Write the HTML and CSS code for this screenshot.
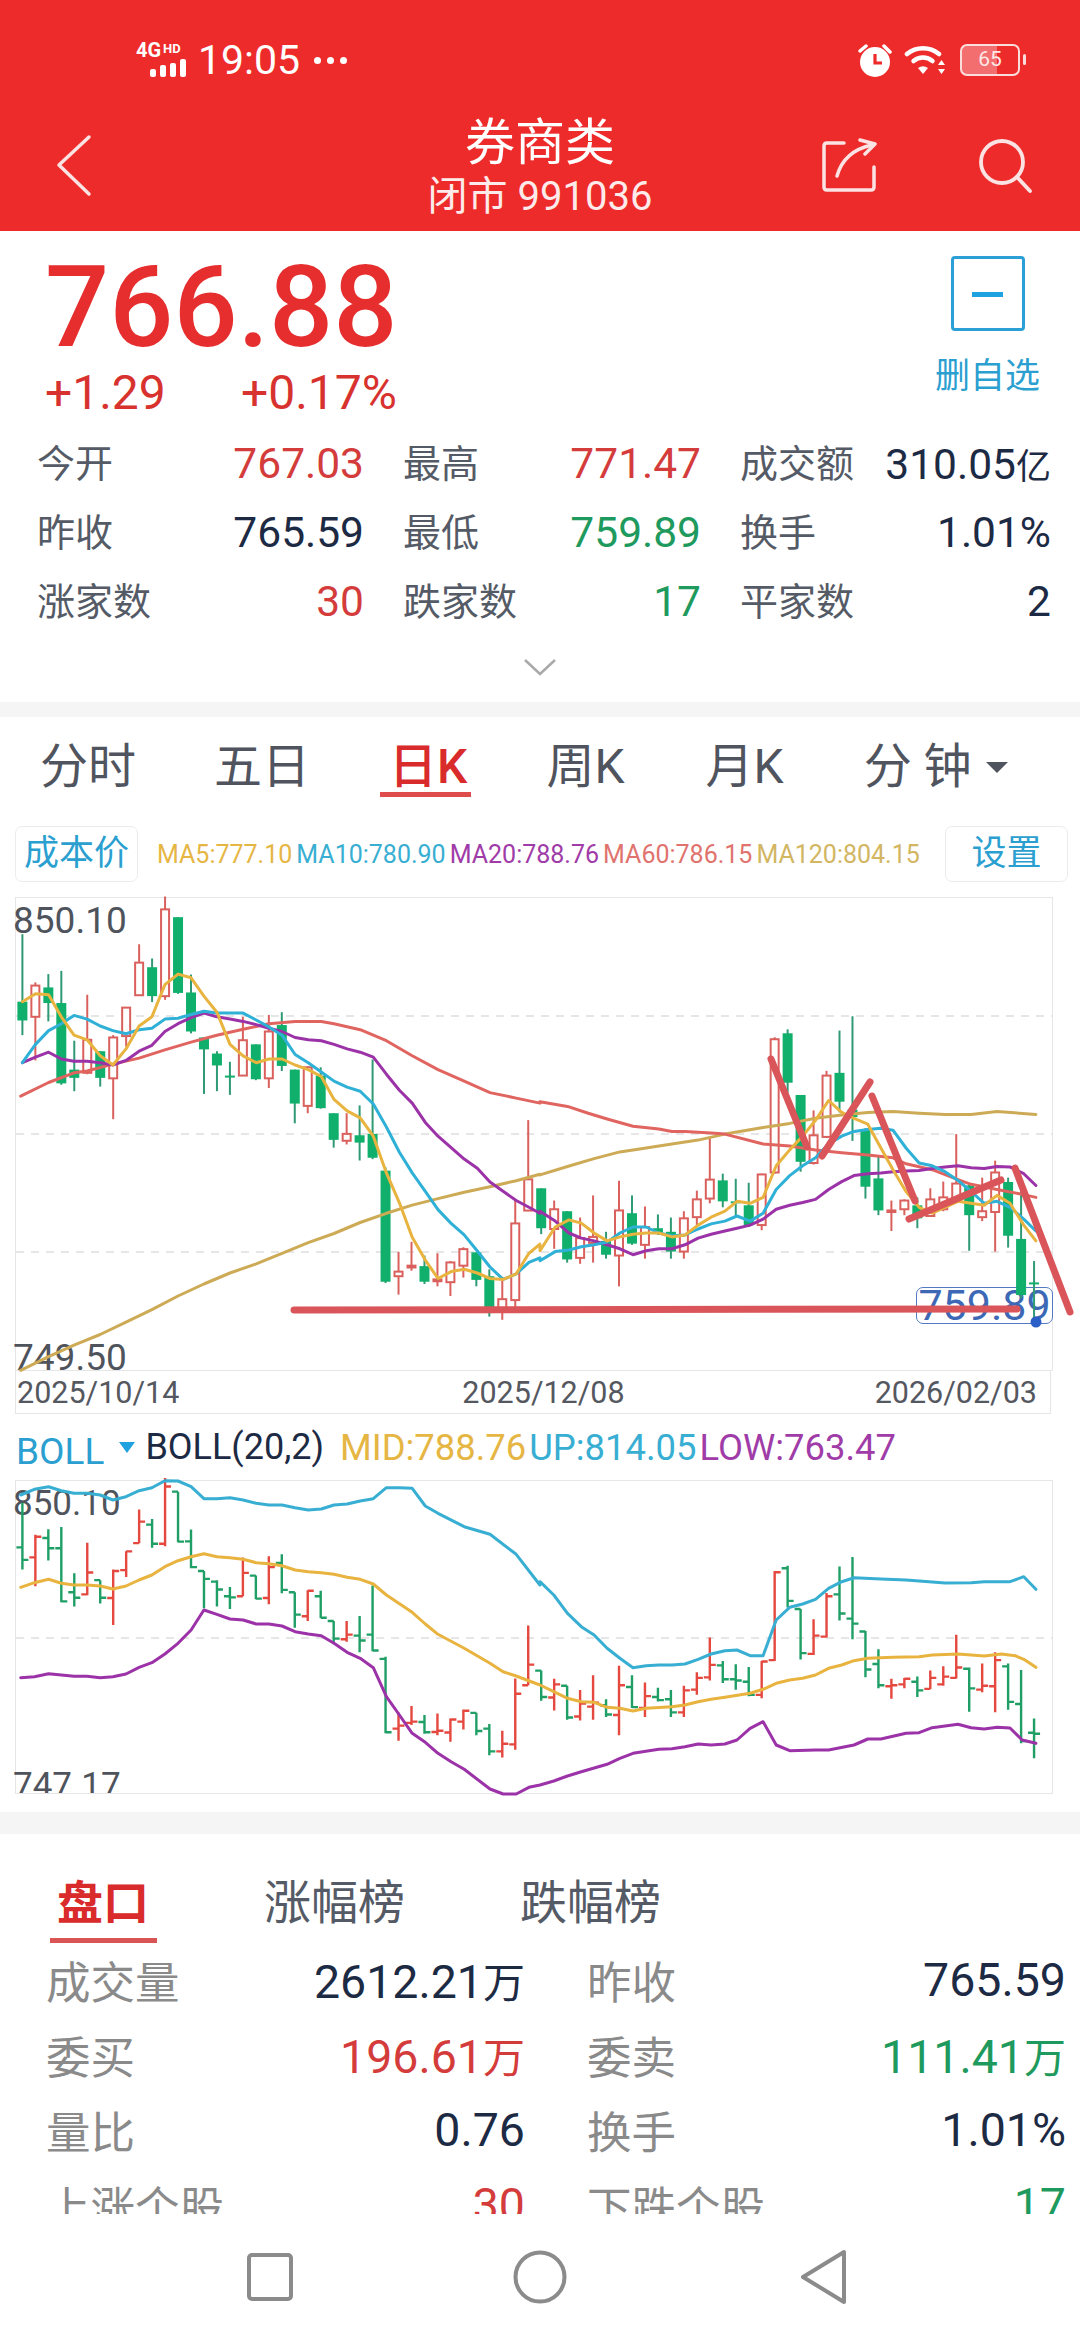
FILE: index.html
```html
<!DOCTYPE html>
<html lang="zh-CN">
<head>
    <meta charset="UTF-8">
    <meta name="viewport" content="width=device-width, initial-scale=1.0">
    <title>券商类</title>
    <link rel="stylesheet" href="styles.css">
</head>
<body>
    <header class="topbar">
        <div class="statusbar">
            <div class="status-left">
                <div class="network">
                    <div class="network-label"><span class="net-4g">4G</span><span class="net-hd">HD</span></div>
                    <div class="signal"><i class="s1"></i><i class="s2"></i><i class="s3"></i><i class="s4"></i></div>
                </div>
                <span class="clock">19:05</span>
                <div class="dots"><i></i><i></i><i></i></div>
            </div>
            <div class="status-right">
                <svg class="alarm" width="34" height="36" viewBox="0 0 34 36">
                    <circle cx="17" cy="20" r="15" fill="#fff"/>
                    <path d="M2 9 L8 4 M26 4 L32 10" stroke="#fff" stroke-width="3.5" stroke-linecap="round"/>
                    <path d="M17 12 V21 H24" fill="none" stroke="#ee2b2b" stroke-width="3.2"/>
                </svg>
                <svg class="wifi" width="42" height="32" viewBox="0 0 42 32" fill="none" stroke="#fff" stroke-linecap="round">
                    <path d="M3 10 A 25 25 0 0 1 35 10" stroke-width="4.5"/>
                    <path d="M9.5 17 A 15 15 0 0 1 28.5 17" stroke-width="4.5"/>
                    <path d="M14 24 L19 30 L24 24 Q19 20.5 14 24 Z" fill="#fff" stroke="none"/>
                    <path d="M34 21 L37.5 16 L41 21 Z M34 25 L37.5 30 L41 25 Z" fill="#fff" stroke="none"/>
                </svg>
                <div class="battery"><div class="battery-fill"></div><span class="battery-num">65</span></div>
            </div>
        </div>
        <div class="navrow">
            <svg class="icon-back" width="40" height="64" viewBox="0 0 40 64" fill="none" stroke="#fbe3e3" stroke-width="3.5" stroke-linecap="round" stroke-linejoin="round">
                <path d="M33 3 L3 31 L33 60"/>
            </svg>
            <div class="title-block">
                <div class="title">券商类</div>
                <div class="subtitle">闭市 991036</div>
            </div>
            <div class="nav-actions">
                <svg class="icon-share" width="56" height="56" viewBox="0 0 56 56" fill="none" stroke="#fbe3e3" stroke-width="3.5" stroke-linecap="round" stroke-linejoin="round">
                    <path d="M22 5 H5 Q2 5 2 8 V49 Q2 52 5 52 H49 Q52 52 52 49 V29"/>
                    <path d="M15 38 Q22 13 50 7"/>
                    <path d="M38 2 L53 6 L43 16"/>
                </svg>
                <svg class="icon-search" width="56" height="56" viewBox="0 0 56 56" fill="none" stroke="#fbe3e3" stroke-width="3.8" stroke-linecap="round">
                    <circle cx="24" cy="24" r="21"/>
                    <path d="M39 39 L52 53"/>
                </svg>
            </div>
        </div>
    </header>

    <section class="quote">
        <div class="quote-head">
            <div>
                <div class="price">766.88</div>
                <div class="change"><span class="change-abs">+1.29</span><span>+0.17%</span></div>
            </div>
            <div class="watch">
                <div class="watch-box"><i></i></div>
                <div class="watch-label">删自选</div>
            </div>
        </div>
        <div class="stats">
            <div class="stat"><span class="label">今开</span><span class="up">767.03</span></div>
            <div class="stat"><span class="label">最高</span><span class="up">771.47</span></div>
            <div class="stat"><span class="label">成交额</span><span class="plain">310.05<span class="unit-small">亿</span></span></div>
            <div class="stat"><span class="label">昨收</span><span class="plain">765.59</span></div>
            <div class="stat"><span class="label">最低</span><span class="down">759.89</span></div>
            <div class="stat"><span class="label">换手</span><span class="plain">1.01%</span></div>
            <div class="stat"><span class="label">涨家数</span><span class="up">30</span></div>
            <div class="stat"><span class="label">跌家数</span><span class="down">17</span></div>
            <div class="stat"><span class="label">平家数</span><span class="plain">2</span></div>
        </div>
        <svg class="expand" width="34" height="18" viewBox="0 0 34 18" fill="none" stroke="#a9a9a9" stroke-width="2.5">
            <path d="M2 2 L17 16 L32 2"/>
        </svg>
    </section>

    <div class="band"></div>

    <section class="kline">
        <nav class="tabs">
            <span class="tab tab-fs">分时</span>
            <span class="tab tab-wr">五日</span>
            <span class="tab tab-active">日K</span>
            <span class="tab tab-week">周K</span>
            <span class="tab tab-month">月K</span>
            <span class="tab tab-min">分 钟<i class="caret"></i></span>
        </nav>

        <div class="ma-row">
            <div class="chip chip-cost">成本价</div>
            <div class="ma-legend">
                <span class="c-ma5">MA5:777.10</span>
                <span class="c-ma10">MA10:780.90</span>
                <span class="c-ma20">MA20:788.76</span>
                <span class="c-ma60">MA60:786.15</span>
                <span class="c-ma120">MA120:804.15</span>
            </div>
            <div class="chip chip-set">设置</div>
        </div>

        <div class="chart chart-main">
            <span class="axis axis-top">850.10</span>
            <span class="axis axis-bottom">749.50</span>
            <span class="last-price">759.89</span>
            <svg id="main-chart" class="plot" width="1036" height="472" viewBox="16 898 1036 472"></svg>
        </div>
        <div class="dates">
            <span>2025/10/14</span>
            <span class="date-mid">2025/12/08</span>
            <span class="date-end">2026/02/03</span>
        </div>

        <div class="boll-row">
            <span class="boll-name">BOLL</span>
            <i class="boll-caret"></i>
            <span class="boll-param">BOLL(20,2)</span>
            <span class="c-ma5">MID:788.76</span>
            <span class="c-ma10">UP:814.05</span>
            <span class="c-ma20">LOW:763.47</span>
        </div>
        <div class="chart chart-boll">
            <span class="axis boll-top">850.10</span>
            <span class="axis boll-bottom">747.17</span>
            <svg id="boll-chart" class="plot" width="1036" height="312" viewBox="16 1481 1036 312"></svg>
        </div>
    </section>

    <div class="band band-low"></div>

    <section class="panel">
        <nav class="panel-tabs">
            <span class="panel-tab panel-tab-active">盘口</span>
            <span class="panel-tab">涨幅榜</span>
            <span class="panel-tab">跌幅榜</span>
        </nav>
        <div class="panel-rows">
            <div class="panel-row"><span class="panel-label">成交量</span><span class="plain">2612.21<span class="unit">万</span></span></div>
            <div class="panel-row"><span class="panel-label">昨收</span><span class="plain">765.59</span></div>
            <div class="panel-row"><span class="panel-label">委买</span><span class="up">196.61<span class="unit">万</span></span></div>
            <div class="panel-row"><span class="panel-label">委卖</span><span class="down">111.41<span class="unit">万</span></span></div>
            <div class="panel-row"><span class="panel-label">量比</span><span class="plain">0.76</span></div>
            <div class="panel-row"><span class="panel-label">换手</span><span class="plain">1.01%</span></div>
            <div class="panel-row"><span class="panel-label">上涨个股</span><span class="up">30</span></div>
            <div class="panel-row"><span class="panel-label">下跌个股</span><span class="down">17</span></div>
        </div>
    </section>

    <footer class="sysnav">
        <svg class="nav-square" width="48" height="50" viewBox="0 0 48 50" fill="none" stroke="#8b8b8b" stroke-width="4">
            <rect x="3" y="3" width="42" height="44" rx="3"/>
        </svg>
        <svg class="nav-circle" width="54" height="54" viewBox="0 0 54 54" fill="none" stroke="#8b8b8b" stroke-width="4">
            <circle cx="27" cy="27" r="24.5"/>
        </svg>
        <svg class="nav-back" width="48" height="56" viewBox="0 0 48 56" fill="none" stroke="#8b8b8b" stroke-width="4" stroke-linejoin="round">
            <path d="M44 3 V53 L3 28 Z"/>
        </svg>
    </footer>

    <script src="chart.js"></script>
</body>
</html>
```

FILE: styles.css
```css
* {
    box-sizing: border-box;
}
body {
    font-family: Roboto, "Noto Sans CJK SC", sans-serif;
    margin: 0;
    width: 1080px;
    height: 2340px;
    overflow: hidden;
    background-color: #fff;
    color: #1d2a44;
}
i {
    display: block;
}

/* top red bar */
.topbar {
    height: 231px;
    background-color: #ee2b2b;
    color: #fff;
}
.statusbar {
    height: 117px;
    padding: 3px 60px 0 136px;
    display: flex;
    justify-content: space-between;
    align-items: center;
}
.status-left,
.status-right {
    display: flex;
    align-items: center;
}
.network {
    width: 56px;
    height: 34px;
    display: flex;
    flex-direction: column;
    justify-content: space-between;
}
.network-label {
    display: flex;
    align-items: flex-start;
    font-weight: 700;
    line-height: 14px;
    height: 14px;
}
.net-4g {
    font-size: 20px;
}
.net-hd {
    font-size: 13px;
    margin-left: 2px;
    line-height: 11px;
}
.signal {
    display: flex;
    align-items: flex-end;
    gap: 4px;
    padding-left: 14px;
    height: 18px;
}
.signal i {
    width: 6px;
    background-color: #fff;
    border-radius: 2px;
}
.s1 { height: 8px; }
.s2 { height: 12px; }
.s3 { height: 14px; }
.s4 { height: 18px; }
.clock {
    font-size: 41px;
    line-height: 46px;
    margin-left: 6px;
}
.dots {
    display: flex;
    gap: 6px;
    margin-left: 14px;
}
.dots i {
    width: 7px;
    height: 7px;
    border-radius: 50%;
    background-color: #fff;
}
.status-right .wifi {
    margin-left: 12px;
}
.battery {
    position: relative;
    width: 60px;
    height: 32px;
    margin-left: 14px;
    border: 2.5px solid #fbdcdc;
    border-radius: 7px;
    overflow: visible;
}
.battery::after {
    content: "";
    position: absolute;
    right: -8px;
    top: 8px;
    width: 3px;
    height: 11px;
    background-color: #fbdcdc;
    border-radius: 2px;
}
.battery-fill {
    width: 35px;
    height: 100%;
    background-color: rgba(255, 255, 255, 0.32);
    border-radius: 4px 0 0 4px;
}
.battery-num {
    position: absolute;
    left: 0;
    right: 0;
    top: 0;
    bottom: 0;
    text-align: center;
    font-size: 21px;
    line-height: 27px;
    color: #fde8e8;
}
.navrow {
    height: 114px;
    display: grid;
    grid-template-columns: 1fr auto 1fr;
    padding: 0 46px;
}
.icon-back {
    margin: 17px 0 0 10px;
}
.title-block {
    text-align: center;
}
.title {
    font-size: 50px;
    line-height: 52px;
}
.subtitle {
    font-size: 40px;
    line-height: 56px;
    color: #fdeaea;
}
.nav-actions {
    display: flex;
    justify-content: flex-end;
    gap: 100px;
    padding-top: 21px;
    align-items: flex-start;
}

/* quote block */
.quote {
    height: 471px;
}
.quote-head {
    height: 198px;
    padding: 25px 40px 0 45px;
    display: flex;
    justify-content: space-between;
}
.price {
    font-size: 113px;
    line-height: 104px;
    font-weight: 500;
    color: #e62e2e;
}
.change {
    font-size: 48px;
    line-height: 50px;
    margin-top: 8px;
    color: #d8322f;
    display: flex;
}
.change-abs {
    width: 196px;
}
.watch {
    width: 105px;
    display: flex;
    flex-direction: column;
    align-items: center;
}
.watch-box {
    flex-shrink: 0;
    width: 74px;
    height: 75px;
    border: 3px solid #2b9fd6;
    border-radius: 4px;
    display: flex;
    justify-content: center;
    padding-top: 33px;
}
.watch-box i {
    width: 31px;
    height: 5px;
    background-color: #1fa3e0;
}
.watch-label {
    font-size: 35px;
    line-height: 44px;
    margin-top: 24px;
    white-space: nowrap;
    color: #2b9fd0;
}
.stats {
    padding-left: 37px;
    display: grid;
    grid-template-columns: 327px 298px 311px;
    column-gap: 39px;
    grid-auto-rows: 69px;
    font-size: 42.5px;
    align-items: center;
}
.stat {
    display: flex;
    justify-content: space-between;
    align-items: center;
}
.label {
    font-size: 38px;
    line-height: 58px;
    color: #555b66;
}
.unit-small {
    font-size: 35px;
}
.plain {
    color: #1d2a44;
}
.up {
    color: #d43c3c;
}
.down {
    color: #1f9a5e;
}
.expand {
    display: block;
    margin: 22px 0 0 523px;
}
.band {
    height: 15px;
    background-color: #f5f5f5;
}
.band-low {
    height: 22px;
    margin-top: 18px;
}

/* k line tabs */
.tabs {
    height: 100px;
    padding-left: 40px;
    display: flex;
    align-items: center;
    font-size: 48px;
    color: #50545e;
}
.tab {
    position: relative;
    display: flex;
    align-items: center;
    line-height: 60px;
}
.tab-wr { margin-left: 78px; }
.tab-active {
    margin-left: 79px;
    font-weight: 500;
    color: #d92b2b;
}
.tab-active::after {
    content: "";
    position: absolute;
    left: -9px;
    right: -4px;
    top: 55px;
    height: 5px;
    background-color: #de4c4c;
}
.tab-week { margin-left: 79px; }
.tab-month { margin-left: 81px; }
.tab-min { margin-left: 80px; }
.caret {
    width: 0;
    height: 0;
    margin-left: 14px;
    border-left: 11px solid transparent;
    border-right: 11px solid transparent;
    border-top: 11px solid #50545e;
}
.ma-row {
    margin-top: 9px;
    height: 56px;
    padding: 0 12px 0 15px;
    display: flex;
    align-items: center;
}
.chip {
    height: 56px;
    width: 123px;
    border: 1.5px solid #ececec;
    border-radius: 7px;
    font-size: 35px;
    line-height: 54px;
    text-align: center;
    color: #2b9fd0;
}
.ma-legend {
    margin-left: 19px;
    flex: 1;
    display: flex;
    gap: 4px;
    font-size: 25px;
}
.c-ma5 { color: #e6b644; }
.c-ma10 { color: #38aed2; }
.c-ma20 { color: #a03ca8; }
.c-ma60 { color: #e0736e; }
.c-ma120 { color: #d2b662; }

/* charts */
.chart {
    position: relative;
    margin-left: 15px;
    width: 1038px;
    border: 1.5px solid #e6e6e6;
}
.chart-main {
    margin-top: 15px;
    height: 474px;
}
.chart-boll {
    height: 314px;
}
.plot {
    position: relative;
    display: block;
    overflow: visible;
}
.axis {
    position: absolute;
    left: -3px;
    color: #4f535c;
    font-size: 37px;
    line-height: 40px;
}
.axis-top {
    top: 3px;
}
.axis-bottom {
    bottom: -3px;
    height: 30px;
    line-height: 30px;
}
.boll-top {
    font-size: 35px;
    top: 3px;
}
.boll-bottom {
    font-size: 35px;
    bottom: 0;
    height: 24px;
    line-height: 34px;
    overflow: hidden;
}
.last-price {
    position: absolute;
    left: 900px;
    top: 389px;
    width: 137px;
    height: 37px;
    border: 1.5px solid #5279c4;
    border-radius: 7px;
    color: #3d68b5;
    font-size: 43px;
    line-height: 35px;
    text-align: center;
}
.dates {
    position: relative;
    margin-left: 15px;
    width: 1036px;
    height: 43px;
    border: 1.5px solid #e6e6e6;
    border-top: none;
    padding-left: 1px;
    font-size: 30.5px;
    line-height: 43px;
    color: #55585f;
    display: flex;
}
.date-mid {
    margin-left: 283px;
}
.date-end {
    margin-left: 250px;
}
.boll-row {
    height: 66px;
    padding-left: 16px;
    display: flex;
    align-items: center;
    font-size: 36.4px;
    gap: 3px;
}
.boll-name {
    color: #2b9fd0;
    font-size: 37px;
    position: relative;
    top: 4px;
}
.boll-caret {
    width: 0;
    height: 0;
    margin-left: 12px;
    border-left: 8px solid transparent;
    border-right: 8px solid transparent;
    border-top: 11px solid #1fa3e0;
}
.boll-param {
    margin: 0 13px 0 7px;
    color: #1d2a44;
    font-size: 36px;
}

/* bottom panel */
.panel {
    height: 380px;
}
.panel-tabs {
    height: 108px;
    padding: 42px 0 0 57px;
    display: flex;
    gap: 115px;
    font-size: 47px;
    line-height: 54px;
    color: #555b66;
}
.panel-tab {
    position: relative;
    height: 54px;
}
.panel-tab-active {
    font-size: 46px;
    font-weight: 700;
    color: #d92b2b;
}
.panel-tab-active::after {
    content: "";
    position: absolute;
    left: -7px;
    right: -8px;
    top: 62px;
    height: 5px;
    background-color: #d95555;
}
.panel-rows {
    height: 272px;
    overflow: hidden;
    padding-left: 46px;
    display: grid;
    grid-template-columns: 479px 479px;
    column-gap: 62px;
    grid-auto-rows: 75px;
    font-size: 46.5px;
    align-items: center;
}
.panel-row {
    display: flex;
    justify-content: space-between;
    align-items: center;
}
.panel-label {
    font-size: 44.5px;
    color: #8a8a8a;
}
.unit {
    font-size: 42px;
}
.sysnav {
    height: 126px;
    padding-left: 246px;
    display: flex;
    align-items: center;
}
.nav-circle {
    margin-left: 219px;
}
.nav-back {
    margin-left: 233px;
}
```

FILE: chart.js
```javascript
// Rows are read off the chart in two halves, each with its own vertical scale.
// [rising, high, bodyTop, bodyBottom, low]
const leftRows = [
    [0,510,657,698,730],[1,615,622,690,785],[0,597,626,660,700],[0,590,660,835,838],
    [0,742,805,823,852],[1,642,740,812,815],[0,765,765,823,842],[1,730,735,824,913],
    [1,670,670,732,755],[1,532,572,643,643],[0,563,582,645,658],[1,428,456,645,653],
    [0,473,473,638,640],[0,598,637,722,726],[0,735,735,761,858],[0,765,770,796,852],
    [0,788,818,822,860],[1,690,741,818,818],[0,750,750,826,828],[1,686,722,824,845],
    [0,680,708,797,808],[0,805,805,879,922],[1,798,800,884,900],[0,800,818,889,890],
    [0,900,900,958,975],[1,900,945,960,968],[0,883,948,964,1003],[0,783,945,997,1000],
    [0,1018,1025,1267,1270],[1,1202,1245,1255,1295],[1,1180,1232,1236,1243],[0,1210,1233,1267,1272],
    [1,1205,1262,1266,1277],[1,1222,1225,1268,1298],[1,1192,1196,1232,1258],[0,1203,1203,1263,1277],
    [0,1240,1255,1330,1343],[1,1262,1305,1330,1350],[1,1090,1140,1307,1325],[1,915,1044,1112,1112]
];
const rightRows = [
    [0,982,982,1083,1098],[1,1013,1035,1085,1135],[0,1040,1040,1162,1170],[1,1056,1108,1158,1173],
    [1,1000,1105,1120,1170],[0,1092,1115,1150,1160],[1,963,1038,1152,1230],[0,1000,1045,1122,1125],
    [1,1028,1080,1125,1160],[0,1048,1083,1095,1100],[0,1056,1092,1142,1160],[1,1040,1058,1142,1160],
    [1,988,1010,1055,1075],[1,855,960,1008,1020],[0,945,962,1015,1030],[0,958,1015,1020,1055],
    [0,968,1025,1075,1080],[1,945,947,1075,1088],[1,600,605,942,945],[0,580,590,715,740],
    [0,746,746,915,940],[1,785,848,918,922],[1,685,697,852,855],[0,583,690,763,790],
    [0,547,783,802,862],[0,830,832,978,1008],[0,900,957,1038,1050],[1,1013,1038,1042,1090],
    [1,1010,1013,1035,1050],[0,1005,1025,1058,1083],[1,982,1010,1052,1053],[1,965,1005,1035,1040],
    [1,845,970,1010,1012],[0,970,975,1050,1140],[1,955,1040,1055,1065],[1,912,942,1042,1142],
    [0,955,966,1102,1132],[0,980,1110,1252,1260],[0,1166,1220,1224,1318]
];

const scaleX = x => x / 2.904;
const mainLeft = ([x, y]) => [scaleX(x), 700 + y / 2.178];
const mainRight = ([x, y]) => [540 + scaleX(x), 800 + y / 2.529];
const bollLeft = ([x, y]) => [scaleX(x), 1400 + y / 3];
const bollRight = ([x, y]) => [540 + scaleX(x), 1400 + y / 3];

const candles = [
    ...leftRows.map(r => [r[0], ...r.slice(1).map(v => 700 + v / 2.178)]),
    ...rightRows.map(r => [r[0], ...r.slice(1).map(v => 800 + v / 2.529)])
];
const barX = i => 22.4 + i * 12.97;
const bollY = y => 1478 + (y - 896.5) * 0.66;

// moving averages, [x, y] pairs for each half
const lines = {
    ma120: ['#cdaa55', [[60,1460],[141,1430],[215,1405],[291,1382],[366,1355],[441,1328],[517,1298],[592,1272],[668,1248],[744,1228],[819,1205],[895,1182],[970,1162],[1046,1138],[1122,1118],[1197,1100],[1272,1086],[1348,1072],[1423,1060],[1499,1047],[1568,1033]],
        [[0,948],[80,927],[157,907],[232,890],[308,880],[383,870],[459,860],[537,845],[648,828],[725,818],[800,805],[876,797],[952,790],[1025,788],[1101,792],[1176,795],[1252,795],[1327,788],[1440,795]]],
    ma60: ['#e0645f', [[60,863],[141,833],[215,812],[253,808],[328,793],[404,780],[479,762],[555,745],[630,730],[706,717],[781,705],[857,700],[933,700],[970,705],[1046,718],[1122,742],[1197,775],[1272,805],[1348,830],[1423,855],[1499,867],[1568,878]],
        [[0,763],[80,775],[140,792],[200,808],[270,825],[345,832],[383,838],[421,838],[497,842],[537,845],[648,870],[725,875],[800,885],[876,892],[952,898],[1025,905],[1063,920],[1139,935],[1214,960],[1252,972],[1327,985],[1405,998],[1440,1005]]],
    ma20: ['#9c32a8', [[65,790],[103,778],[141,767],[178,782],[215,787],[253,787],[291,790],[328,795],[366,785],[404,765],[441,752],[479,722],[517,705],[555,692],[592,682],[630,690],[668,695],[706,700],[744,707],[781,715],[819,722],[857,735],[895,740],[933,742],[970,750],[1008,760],[1046,767],[1084,778],[1122,815],[1160,850],[1197,878],[1235,920],[1272,950],[1310,975],[1348,1000],[1386,1020],[1423,1050],[1461,1070],[1499,1090],[1536,1105],[1568,1118]],
        [[0,1040],[44,1065],[84,1095],[120,1108],[157,1115],[195,1125],[232,1135],[270,1150],[308,1140],[345,1135],[383,1135],[421,1125],[459,1108],[497,1098],[537,1090],[572,1083],[610,1075],[648,1060],[686,1035],[725,1025],[763,1018],[800,1010],[838,985],[876,965],[912,950],[952,945],[990,943],[1025,940],[1063,938],[1101,937],[1139,932],[1176,928],[1214,925],[1252,930],[1290,932],[1327,927],[1365,928],[1405,945],[1440,975]]],
    ma10: ['#2fb0d6', [[65,790],[103,750],[141,720],[178,705],[215,687],[253,695],[291,710],[328,720],[366,727],[404,718],[441,715],[479,695],[517,693],[555,685],[592,678],[630,682],[668,682],[706,682],[744,697],[781,712],[819,730],[857,772],[895,790],[933,810],[970,830],[1008,843],[1046,852],[1084,880],[1122,930],[1160,985],[1197,1030],[1235,1070],[1272,1110],[1310,1140],[1348,1165],[1386,1200],[1423,1235],[1461,1262],[1499,1250],[1536,1225],[1568,1215]],
        [[0,1165],[44,1142],[84,1138],[120,1130],[157,1125],[195,1118],[232,1095],[270,1080],[308,1080],[345,1095],[383,1102],[421,1100],[459,1085],[497,1072],[537,1065],[572,1052],[610,1065],[648,1045],[686,985],[725,950],[763,925],[800,905],[838,870],[876,850],[912,838],[952,833],[990,830],[1025,835],[1063,880],[1101,918],[1139,925],[1176,940],[1214,962],[1252,990],[1290,1020],[1327,1015],[1365,1030],[1405,1060],[1440,1090]]],
    ma5: ['#e8b33f', [[65,657],[103,640],[141,642],[178,690],[215,730],[253,740],[291,775],[328,795],[366,760],[404,710],[441,690],[479,620],[517,597],[555,605],[592,645],[630,680],[668,750],[706,775],[744,790],[781,782],[819,782],[857,795],[895,805],[933,820],[970,870],[1008,895],[1046,910],[1084,950],[1122,1030],[1160,1095],[1197,1170],[1235,1220],[1272,1260],[1310,1245],[1348,1240],[1386,1248],[1423,1260],[1461,1262],[1499,1250],[1536,1205],[1568,1185]],
        [[0,1140],[44,1080],[84,1062],[120,1070],[157,1095],[195,1115],[232,1105],[270,1098],[308,1095],[345,1095],[383,1105],[421,1100],[459,1075],[497,1055],[537,1040],[572,1015],[610,1020],[648,1005],[686,925],[725,885],[763,850],[800,810],[838,760],[876,790],[912,805],[952,820],[990,880],[1025,935],[1063,990],[1101,1030],[1139,1045],[1176,1030],[1214,1015],[1252,1020],[1290,1025],[1327,1000],[1365,1020],[1405,1075],[1440,1115]]]
};

const bands = [
    ['#e8b33f', [[60,562],[100,548],[141,538],[178,550],[215,555],[253,555],[291,558],[328,567],[366,558],[404,540],[441,525],[479,500],[517,482],[555,470],[592,461],[630,470],[668,473],[706,478],[744,488],[781,491],[819,497],[857,510],[895,515],[933,518],[970,523],[1008,532],[1046,538],[1084,552],[1122,585],[1197,637],[1235,672],[1272,703],[1348,745],[1423,790],[1461,815],[1499,828],[1568,855]],
        [[0,855],[40,875],[80,895],[120,905],[157,907],[195,922],[232,925],[270,933],[308,925],[383,920],[421,915],[459,905],[497,898],[537,892],[610,880],[648,868],[686,850],[725,840],[763,835],[800,825],[838,805],[876,795],[912,782],[952,775],[1025,772],[1101,770],[1139,765],[1214,762],[1290,768],[1340,762],[1380,767],[1405,778],[1440,802]]],
    ['#38aed2', [[60,285],[100,268],[141,260],[178,272],[215,280],[253,280],[291,285],[328,300],[366,290],[404,272],[441,263],[479,242],[517,243],[555,260],[592,296],[630,296],[668,293],[706,300],[744,310],[781,315],[819,315],[857,323],[895,330],[933,327],[970,315],[1008,312],[1046,303],[1084,296],[1122,263],[1160,263],[1197,265],[1235,318],[1272,340],[1348,380],[1423,403],[1499,463],[1568,555]],
        [[0,545],[40,585],[80,640],[120,680],[157,705],[195,745],[232,775],[270,803],[308,797],[345,795],[383,795],[421,792],[459,778],[497,762],[537,752],[572,750],[610,767],[648,767],[686,660],[725,622],[763,612],[800,598],[838,565],[876,545],[912,533],[990,537],[1063,540],[1139,546],[1176,549],[1252,548],[1290,545],[1365,545],[1405,530],[1440,568]]],
    ['#9c32a8', [[60,833],[100,830],[141,821],[178,825],[215,829],[253,829],[291,833],[328,830],[366,822],[404,802],[441,788],[479,762],[517,730],[555,690],[592,630],[630,643],[668,657],[706,660],[744,672],[781,672],[819,678],[857,695],[895,702],[933,707],[970,730],[1008,757],[1046,775],[1084,803],[1122,890],[1160,945],[1197,1000],[1235,1027],[1272,1060],[1310,1085],[1348,1108],[1423,1167],[1461,1182],[1499,1182],[1536,1162],[1568,1155]],
        [[0,1155],[40,1143],[80,1128],[120,1115],[195,1093],[232,1075],[270,1060],[345,1048],[383,1046],[421,1040],[459,1032],[497,1035],[537,1032],[572,1020],[610,985],[648,965],[686,1035],[725,1052],[800,1050],[838,1050],[912,1035],[952,1017],[990,1017],[1063,1000],[1101,998],[1139,983],[1214,973],[1252,983],[1290,987],[1327,982],[1365,984],[1400,1020],[1440,1030]]]
];

// hand drawn marks on top of the chart, page pixels
const marks = [
    [[294,1310],[1017,1309]],
    [[771,1059],[807,1147]],
    [[822,1156],[870,1082]],
    [[872,1096],[915,1201]],
    [[909,1219],[1001,1180]],
    [[1015,1168],[1070,1312]]
];

function add(svg, tag, attrs) {
    const el = document.createElementNS('http://www.w3.org/2000/svg', tag);
    Object.keys(attrs).forEach(k => el.setAttribute(k, attrs[k]));
    svg.appendChild(el);
}

function dashed(svg, y) {
    add(svg, 'line', { x1: 16, x2: 1052, y1: y, y2: y, stroke: '#dedede', 'stroke-width': 1.5, 'stroke-dasharray': '8 7' });
}

function polyline(svg, color, points, width) {
    add(svg, 'polyline', {
        points: points.map(p => p[0].toFixed(1) + ',' + p[1].toFixed(1)).join(' '),
        fill: 'none', stroke: color, 'stroke-width': width,
        'stroke-linejoin': 'round', 'stroke-linecap': 'round'
    });
}

function drawMain() {
    const svg = document.getElementById('main-chart');
    [1016, 1134, 1252].forEach(y => dashed(svg, y));

    candles.forEach((c, i) => {
        const [rising, high, top, bottom, low] = c;
        const x = barX(i);
        if (rising) {
            const wick = { stroke: '#d9605c', 'stroke-width': 2 };
            add(svg, 'line', { x1: x, x2: x, y1: high, y2: top, ...wick });
            add(svg, 'line', { x1: x, x2: x, y1: bottom, y2: low, ...wick });
            add(svg, 'rect', { x: x - 4, y: top, width: 8, height: bottom - top, fill: '#fff', stroke: '#d9605c', 'stroke-width': 2 });
        } else {
            add(svg, 'line', { x1: x, x2: x, y1: high, y2: low, stroke: '#2f9a74', 'stroke-width': 2 });
            add(svg, 'rect', { x: x - 5, y: top, width: 10, height: Math.max(bottom - top, 2), fill: '#10b06c' });
        }
    });

    Object.values(lines).forEach(([color, left, right]) => {
        polyline(svg, color, [...left.map(mainLeft), ...right.map(mainRight)], 3);
    });

    add(svg, 'circle', { cx: 1036, cy: 1322, r: 5.5, fill: '#2a5fc8' });
    marks.forEach(m => polyline(svg, '#d9555a', m, 7));
}

function drawBoll() {
    const svg = document.getElementById('boll-chart');
    dashed(svg, 1638);

    candles.forEach((c, i) => {
        const [rising, high, top, bottom, low] = c;
        const x = barX(i);
        const color = rising ? '#e4483f' : '#1f9f66';
        const open = bollY(rising ? bottom : top);
        const close = bollY(rising ? top : bottom);
        const d = `M${x} ${bollY(high)} V${bollY(low)} M${x - 6} ${open} H${x} M${x} ${close} H${x + 6}`;
        add(svg, 'path', { d, fill: 'none', stroke: color, 'stroke-width': 2.4 });
    });

    bands.forEach(([color, left, right]) => {
        polyline(svg, color, [...left.map(bollLeft), ...right.map(bollRight)], 3);
    });
}

drawMain();
drawBoll();
```
